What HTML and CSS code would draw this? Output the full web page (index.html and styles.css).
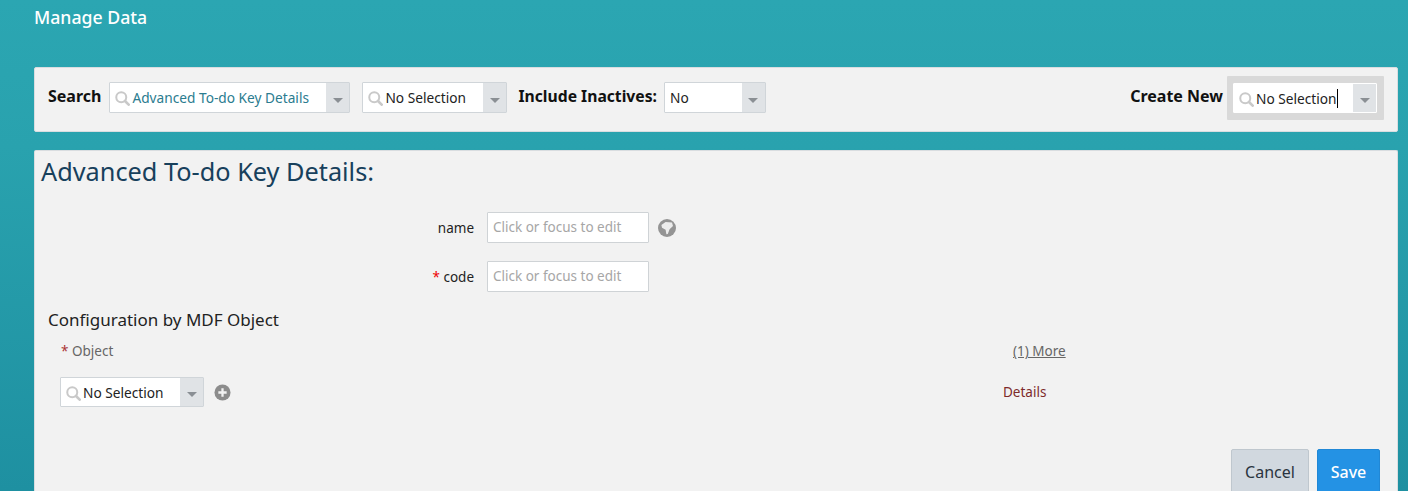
FILE: index.html
```html
<!DOCTYPE html>
<html lang="en">
<head>
  <meta charset="UTF-8" />
  <meta name="viewport" content="width=device-width, initial-scale=1.0" />
  <title>Manage Data</title>
  <link rel="stylesheet" href="styles.css">
</head>
<body>
  <svg class="icon-defs" width="0" height="0" aria-hidden="true">
    <symbol id="i-search" viewBox="0 0 18 18">
      <circle cx="7.5" cy="7.5" r="6" fill="none" stroke="currentColor" stroke-width="2.4"/>
      <path d="M12 12 L16.4 16.4" stroke="currentColor" stroke-width="3.2" stroke-linecap="round"/>
    </symbol>
  </svg>

  <header class="page-title">Manage Data</header>

  <section class="search-bar">
    <span class="bar-label">Search</span>
    <div class="combo combo-wide">
      <svg class="combo-search"><use href="#i-search"/></svg>
      <span class="combo-value is-link">Advanced To-do Key Details</span>
      <span class="combo-arrow"></span>
    </div>
    <div class="combo combo-mid">
      <svg class="combo-search"><use href="#i-search"/></svg>
      <span class="combo-value">No Selection</span>
      <span class="combo-arrow"></span>
    </div>
    <span class="bar-label inactives-label">Include Inactives:</span>
    <div class="combo combo-small">
      <span class="combo-value no-icon">No</span>
      <span class="combo-arrow"></span>
    </div>
    <div class="create-new">
      <span class="bar-label">Create New</span>
      <div class="focus-ring">
        <div class="combo combo-mid combo-focus">
          <svg class="combo-search"><use href="#i-search"/></svg>
          <span class="combo-value"><span class="caret-text">No Selection</span></span>
          <span class="combo-arrow"></span>
        </div>
      </div>
    </div>
  </section>

  <section class="details">
    <h1 class="details-title">Advanced To-do Key Details:</h1>

    <div class="form-row">
      <label class="form-label">name</label>
      <div class="text-field">Click or focus to edit</div>
      <svg class="globe" viewBox="0 0 18 18" aria-hidden="true">
        <circle cx="9" cy="9" r="9" fill="#949494"/>
        <path d="M3.4 6 L7.6 3 L14 3.6 L15 7 L11.6 10.2 L9.8 15 L8.4 15.2 L7.6 10.8 L4 8.8 Z" fill="#ececec"/>
      </svg>
    </div>
    <div class="form-row">
      <label class="form-label"><span class="req">*</span> code</label>
      <div class="text-field">Click or focus to edit</div>
    </div>

    <h2 class="config-title">Configuration by MDF Object</h2>

    <div class="config-table">
      <div class="col-head"><span class="req-dark">*</span> Object</div>
      <div class="col-more"><a class="more-link" href="#">(1) More</a></div>
      <div class="object-cell">
        <div class="combo combo-object">
          <svg class="combo-search"><use href="#i-search"/></svg>
          <span class="combo-value">No Selection</span>
          <span class="combo-arrow"></span>
        </div>
        <svg class="plus" viewBox="0 0 18 18" aria-hidden="true">
          <circle cx="9" cy="9" r="8.5" fill="#8c8c8c"/>
          <path d="M9 4.6 V13.4 M4.6 9 H13.4" stroke="#f2f2f2" stroke-width="2.4"/>
        </svg>
      </div>
      <div class="details-cell"><a class="details-link" href="#">Details</a></div>
    </div>

    <div class="actions">
      <button class="btn btn-cancel">Cancel</button>
      <button class="btn btn-save">Save</button>
    </div>
  </section>
</body>
</html>
```

FILE: styles.css
```css
html, body {
  margin: 0;
  padding: 0;
  height: 491px;
  overflow: hidden;
}
body {
  font-family: 'Noto Sans', 'Open Sans', sans-serif;
  background: linear-gradient(to bottom, #2ba6b2 0%, #29a2ae 30%, #1e90a1 100%);
  padding: 0 10px 0 34px;
  box-sizing: border-box;
  color: #000;
}
.icon-defs {
  position: absolute;
}

.page-title {
  color: #fff;
  font-size: 17.7px;
  font-weight: 500;
  line-height: 24px;
  padding-top: 5px;
  height: 67px;
  box-sizing: border-box;
}

.search-bar {
  height: 65px;
  background: #f2f2f2;
  border: 1px solid #d9dde0;
  border-radius: 2px;
  box-sizing: border-box;
  display: flex;
  align-items: flex-start;
  padding: 14px 13px 0 13px;
}
.bar-label {
  font-size: 16px;
  font-weight: 700;
  line-height: 28px;
  white-space: nowrap;
  color: #111;
}
.search-bar > .bar-label:first-child {
  margin-right: 8px;
}
.inactives-label {
  font-size: 15.7px;
  margin: 0 7px 0 11px;
}
.combo-wide + .combo-mid {
  margin-left: 12px;
}

.combo {
  display: flex;
  align-items: center;
  height: 31px;
  background: #fff;
  border: 1px solid #d0d5d9;
  border-radius: 1px;
  box-sizing: border-box;
  font-size: 13.7px;
  color: #222;
}
.combo-wide { width: 241px; }
.combo-mid { width: 145px; }
.combo-small { width: 102px; }
.combo-object { width: 144px; height: 30px; }
.combo-search {
  width: 15px;
  height: 15px;
  margin: 2px 2px 0 5px;
  color: #c9c9c9;
  flex: none;
}
.combo-value {
  flex: 1;
  white-space: nowrap;
  overflow: hidden;
}
.combo-value.no-icon {
  padding-left: 5px;
}
.is-link {
  color: #2b7c8f;
}
.combo-arrow {
  width: 23px;
  align-self: stretch;
  background: #e0e3e6;
  display: flex;
  align-items: center;
  justify-content: center;
}
.combo-arrow::after {
  content: "";
  margin-top: 5px;
  border-left: 5px solid transparent;
  border-right: 5px solid transparent;
  border-top: 5px solid #8a8f94;
}

.create-new {
  margin-left: auto;
  display: flex;
  align-items: flex-start;
  gap: 4px;
}
.focus-ring {
  margin-top: -6px;
  background: #d9d9d9;
  padding: 7px 7px 7px 6px;
  border-radius: 1px;
}
.combo-focus {
  width: 144px;
  height: 30px;
  border-color: #fff;
}
.caret-text {
  border-right: 1px solid #000;
}

.details {
  margin-top: 18px;
  height: 341px;
  overflow: hidden;
  background: #f2f2f2;
  border: 1px solid #d9dde0;
  border-bottom: 0;
  border-radius: 2px 2px 0 0;
  box-sizing: border-box;
  padding: 0 6px;
}
.details-title {
  margin: 0;
  font-size: 25.3px;
  font-weight: 400;
  line-height: 32px;
  padding-top: 4px;
  margin-bottom: 25px;
  color: #17405c;
}

.form-row {
  display: flex;
  align-items: center;
  height: 31px;
  margin-bottom: 18px;
}
.form-label {
  width: 433px;
  text-align: right;
  font-size: 13.5px;
  color: #222;
  margin-right: 13px;
}
.req { color: #e00; }
.req-dark { color: #a33; }
.text-field {
  width: 162px;
  height: 31px;
  line-height: 29px;
  box-sizing: border-box;
  background: #fff;
  border: 1px solid #cfd3d6;
  border-radius: 1px;
  padding-left: 5px;
  font-size: 13.5px;
  color: #a6a6a6;
}
.globe {
  width: 18px;
  height: 18px;
  margin-left: 9px;
}

.config-title {
  margin: 0;
  padding-left: 7px;
  font-size: 17px;
  font-weight: 400;
  line-height: 24px;
  color: #222;
  margin-top: -2px;
}

.config-table {
  display: grid;
  grid-template-columns: 952px 1fr;
  padding-left: 20px;
  margin-top: 8px;
  font-size: 13.5px;
}
.col-head {
  height: 37px;
  line-height: 22px;
  color: #666;
}
.col-more {
  line-height: 22px;
}
.more-link {
  color: #666;
  text-decoration: underline;
}
.object-cell {
  margin-left: -1px;
  display: flex;
  align-items: center;
  gap: 10px;
  height: 30px;
}
.plus {
  width: 17px;
  height: 17px;
}
.details-cell {
  display: flex;
  align-items: center;
  margin-left: -10px;
}
.details-link {
  color: #7d2a2a;
  text-decoration: none;
}

.actions {
  display: flex;
  justify-content: flex-end;
  gap: 8px;
  margin-top: 42px;
  padding-right: 11px;
}
.btn {
  font-family: inherit;
  font-size: 16px;
  height: 46px;
  padding: 0;
  border-radius: 2px;
}
.btn-cancel {
  width: 78px;
  background: #d1d8df;
  border: 1px solid #bfc7ce;
  color: #2a3440;
}
.btn-save {
  width: 63px;
  background: #2492e4;
  border: 1px solid #2188d6;
  color: #fff;
  font-weight: 500;
}
```
